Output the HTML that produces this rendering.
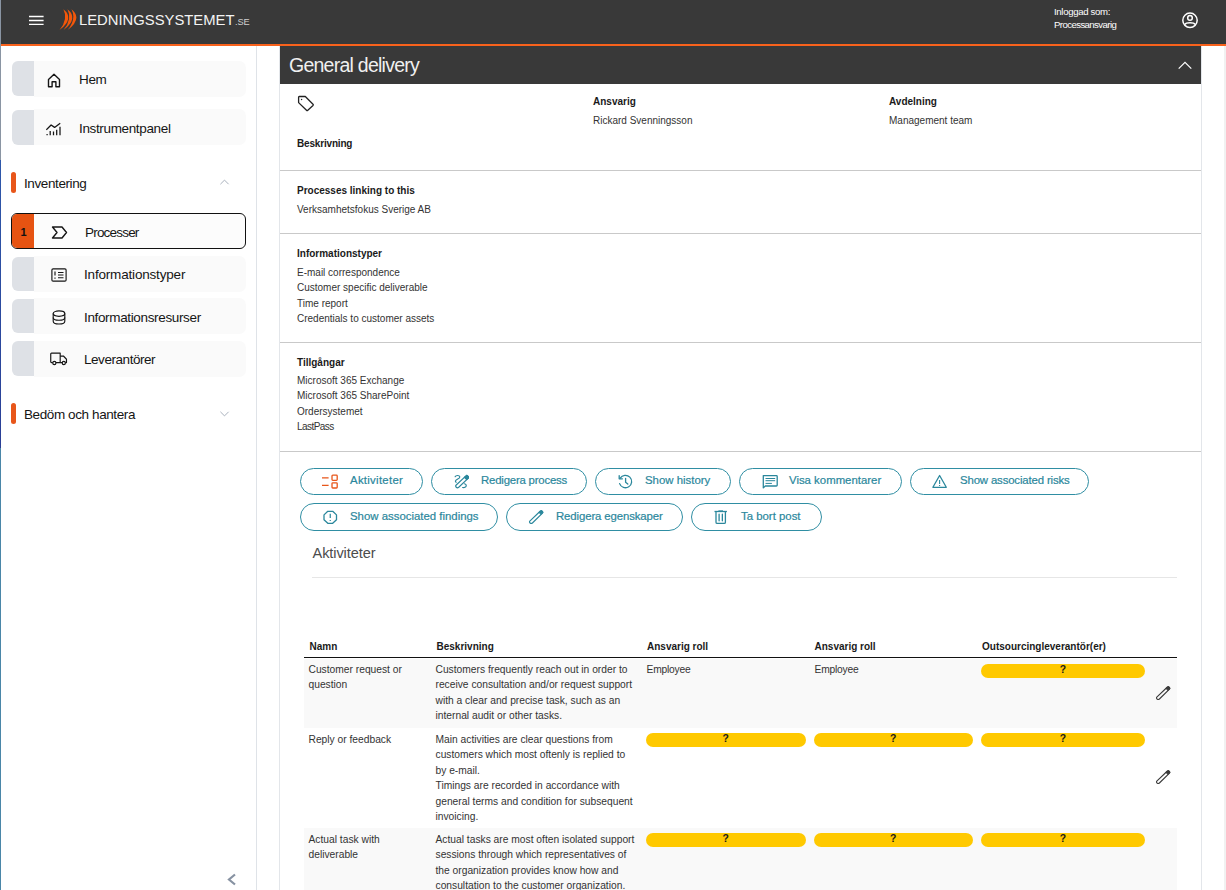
<!DOCTYPE html>
<html lang="sv">
<head>
<meta charset="utf-8">
<title>Ledningssystemet</title>
<style>
*{box-sizing:border-box;margin:0;padding:0}
html,body{width:1226px;height:890px;overflow:hidden;background:#fff;font-family:"Liberation Sans",sans-serif;color:#1b1b1b}
body{position:relative}
.abs{position:absolute}
/* top bar */
#top{position:absolute;left:0;top:0;width:1226px;height:44px;background:#393939}
#topline{position:absolute;left:0;top:44px;width:1226px;height:2px;background:#f9621c}
#winl{position:absolute;left:0;top:0;width:1px;height:890px;background:linear-gradient(#8a95a3 0,#8a95a3 160px,#2e58aa 160px,#2a3f96 448px,#4a86a8 448px,#4a86a8 890px);z-index:9}
#scr{position:absolute;left:1224px;top:46px;width:2px;height:844px;background:#f1f1f1}
#logo{position:absolute;left:79px;top:8.8px;color:#f3f3f3;font-size:15.4px;line-height:22px;letter-spacing:0;white-space:nowrap;transform:scaleX(0.962);transform-origin:0 50%}
#logo small{font-size:9.6px;letter-spacing:-0.1px;color:#d0d0d0;margin-left:0.5px}
#user{position:absolute;left:1054px;top:6px;color:#fff;font-size:9.6px;line-height:12.7px;letter-spacing:-0.33px;white-space:nowrap}
/* sidebar */
#side{position:absolute;left:1px;top:46px;width:256px;height:844px;background:#fff;border-right:1px solid #dfe3e8}
.nav{position:absolute;left:12px;width:234px;height:35px;--t:-1px;--b:-1px}
.nav::before{content:"";position:absolute;left:22px;right:0;top:var(--t);bottom:var(--b);background:#fafafa;border-radius:0 7px 7px 0}
.nav i{position:absolute;left:0;top:0;width:22px;height:100%;background:#dee1e6;border-radius:6px 0 0 6px}
.nav span{position:absolute;top:1px;line-height:35px;font-size:13.5px;letter-spacing:-0.35px;color:#151515;white-space:nowrap}
.nav svg{position:absolute}
.nav.act{left:11px;width:235px;height:36px;border:1px solid #111;background:#fcfcfc;border-radius:6px;overflow:hidden}
.nav.act::before{display:none}
.nav.act i{background:#e65312;width:22px;border-radius:0}
.grp{position:absolute;left:11px;width:5px;height:21px;border-radius:3px;background:#e8561a}
.grpt{position:absolute;left:24px;font-size:13.5px;letter-spacing:-0.4px;color:#151515;white-space:nowrap;line-height:20px}
/* main */
#panel{position:absolute;left:279px;top:46px;width:923px;height:844px;border-left:1px solid #e3e6ea;border-right:1px solid #e3e6ea;background:#fff}
#phead{position:absolute;left:280px;top:46px;width:921px;height:37.5px;background:#393939}
#ptitle{position:absolute;left:289px;top:53px;font-size:19.5px;line-height:24px;color:#f0f0f0;letter-spacing:-0.75px;white-space:nowrap}
.sep{position:absolute;left:280px;width:921px;height:1px;background:#c9c9c9}
.b{position:absolute;font-weight:700;font-size:10px;line-height:14px;letter-spacing:0;color:#1a1a1a;white-space:nowrap}
.t{position:absolute;font-size:10px;line-height:15.33px;letter-spacing:0;color:#333;white-space:nowrap}

.btn{position:absolute;height:27px;border:1px solid #2f8ea3;border-radius:14px;background:#fff}
.btn span{position:absolute;left:49px;top:-1px;line-height:24px;font-size:11.4px;color:#2a879c;white-space:nowrap;letter-spacing:0;-webkit-text-stroke:0.2px #2a879c}
.btn svg{position:absolute}
.btn.r2{height:27.5px}.btn.r2 span{top:0}.btn.r2 svg{margin-top:0}
#akt{position:absolute;left:312.5px;top:543px;font-size:14.6px;line-height:20px;color:#4c4c4c;letter-spacing:-0.1px}
.th{position:absolute;top:640px;font-weight:700;font-size:10px;line-height:14px;color:#1a1a1a;white-space:nowrap}
.row{position:absolute;left:304px;width:873px}
.c{position:absolute;font-size:10.25px;line-height:15.45px;color:#333;white-space:nowrap}
.pill{position:absolute;height:13.5px;border-radius:7px;background:#ffc900;text-align:center;font-weight:700;font-size:10.4px;line-height:12.4px;color:#1a1a1a}
</style>
</head>
<body>
<div id="top"></div><div id="topline"></div><div id="winl"></div><div id="scr"></div>

<svg class="abs" style="left:28px;top:14px" width="17" height="13" viewBox="0 0 17 13" stroke="#fff" stroke-width="1.4"><path d="M1 2.5 H15.6 M1 6.5 H15.6 M1 10.4 H15.6"/></svg>
<svg class="abs" style="left:57px;top:8px" width="24" height="24" viewBox="0 0 24 24" fill="#f4570a"><path d="M6.4 1.2 Q17.9 10.3 2.5 22.1 Q11.5 11 6.4 1.2 Z"/><path d="M10.45 1.2 Q21.95 10.3 6.55 22.1 Q15.55 11 10.45 1.2 Z"/><path d="M14.5 1.2 Q26 10.3 10.6 22.1 Q19.6 11 14.5 1.2 Z"/></svg>
<svg class="abs" style="left:1181px;top:11px" width="18" height="18" viewBox="0 0 18 18" fill="none" stroke="#fff" stroke-width="1.5"><circle cx="9" cy="9.3" r="7.2"/><circle cx="9" cy="6.9" r="2.3"/><path d="M3.6 13.6 C5.2 11.2 12.8 11.2 14.4 13.6"/></svg>
<div id="logo">LEDNINGSSYSTEMET<small>.SE</small></div>
<div id="user">Inloggad som:<br><span style="letter-spacing:-0.58px">Processansvarig</span></div>
<div id="side"></div>

<!-- sidebar -->
<div class="nav" style="top:61px;--t:0px"><i></i>
<svg style="left:35px;top:12.3px" width="14" height="15" viewBox="0 0 14 15" fill="none" stroke="#151515" stroke-width="1.4" stroke-linejoin="round"><path d="M1.5 6.4 L7 1.3 L12.5 6.4 V13.8 H8.9 V8.8 H5.1 V13.8 H1.5 Z"/></svg>
<span style="left:67px">Hem</span></div>
<div class="nav" style="top:110px;--b:0px"><i></i>
<svg style="left:34px;top:11px" width="16" height="16" viewBox="0 0 16 16" fill="none" stroke="#151515" stroke-width="1.3"><path d="M0.3 8.9 L5.1 4 L8.6 6.4 L14.2 2.2" stroke-linejoin="round"/><path d="M1.1 12.9 V14.3 M4.2 9.9 V14.3 M7.5 10.4 V14.3 M10.7 8.8 V14.3 M14 5.8 V14.3" stroke-width="1.25"/></svg>
<span style="left:67px">Instrumentpanel</span></div>
<div class="grp" style="top:172px"></div><div class="grpt" style="top:174px">Inventering</div>
<svg class="abs" style="left:219px;top:178px" width="11" height="8" viewBox="0 0 11 8" fill="none" stroke="#a9b1bd" stroke-width="1"><path d="M1.4 6.2 L5.5 2.1 L9.6 6.2"/></svg>
<div class="nav act" style="top:213px"><i></i><b style="position:absolute;left:8.5px;top:1px;line-height:34px;font-size:11px;color:#111">1</b>
<svg style="left:39px;top:12px" width="17" height="13" viewBox="0 0 17 13" fill="none" stroke="#151515" stroke-width="1.4" stroke-linejoin="round"><path d="M1.5 1 H11 L15.5 6.5 L11 12 H1.5 L6 6.5 Z"/></svg>
<span style="left:73px;top:2px;line-height:34px;letter-spacing:-0.8px">Processer</span></div>
<div class="nav" style="top:257px;height:34px"><i></i>
<svg style="left:38.5px;top:10.5px" width="16" height="14" viewBox="0 0 16 14" fill="none" stroke="#151515" stroke-width="1.15"><rect x="0.9" y="0.9" width="14.2" height="12.2" rx="1.2"/><path d="M4 3.5 V7.5 M4 9.4 V10.8 M7 4.5 H12.5 M7 7 H12.5 M7 9.7 H12.5"/></svg>
<span style="left:72px;line-height:34px;letter-spacing:-0.18px">Informationstyper</span></div>
<div class="nav" style="top:299px;height:34px"><i></i>
<svg style="left:40px;top:11px" width="14" height="15" viewBox="0 0 14 15" fill="none" stroke="#151515" stroke-width="1.15"><ellipse cx="7" cy="3.6" rx="5.8" ry="2.7"/><path d="M1.2 3.6 V11.2 C1.2 12.8 3.8 14 7 14 C10.2 14 12.8 12.8 12.8 11.2 V3.6"/><path d="M1.2 7.4 C1.2 9 3.8 10.2 7 10.2 C10.2 10.2 12.8 9 12.8 7.4"/></svg>
<span style="left:72px;top:2px;line-height:34px">Informationsresurser</span></div>
<div class="nav" style="top:341px;height:35px;--t:-0.5px;--b:-0.7px"><i></i>
<svg style="left:38px;top:11px" width="17.6" height="14" viewBox="0 0 19 14" preserveAspectRatio="none" fill="none" stroke="#151515" stroke-width="1.25" stroke-linejoin="round"><path d="M3 10.5 H1.6 C1.2 10.5 0.8 10.1 0.8 9.7 V2 C0.8 1.5 1.2 1.1 1.6 1.1 H11 V10.5 H6.4"/><path d="M11 4 H14.5 L17.8 7.2 V10.5 H16.6 M11 10.5 H13.2"/><circle cx="4.7" cy="11" r="1.7"/><circle cx="14.9" cy="11" r="1.7"/></svg>
<span style="left:72px;letter-spacing:-0.45px">Leverant&ouml;rer</span></div>
<div class="grp" style="top:403px"></div><div class="grpt" style="top:404.6px">Bed&ouml;m och hantera</div>
<svg class="abs" style="left:219px;top:410px" width="11" height="8" viewBox="0 0 11 8" fill="none" stroke="#a9b1bd" stroke-width="1"><path d="M1.4 1.8 L5.5 5.9 L9.6 1.8"/></svg>
<svg class="abs" style="left:226px;top:873px" width="11" height="13" viewBox="0 0 11 13" fill="none" stroke="#8792a2" stroke-width="2.2"><path d="M9 1.5 L3 6.5 L9 11.5"/></svg>
<div id="panel"></div>
<div id="phead"></div>
<svg class="abs" style="left:1177px;top:59px" width="16" height="11" viewBox="0 0 16 11" fill="none" stroke="#fff" stroke-width="1.2"><path d="M1.7 9.6 L8 3.3 L14.3 9.6"/></svg>
<div id="ptitle">General delivery</div>

<!-- content -->
<svg class="abs" style="left:297px;top:95px" width="18" height="17" viewBox="0 0 18 17" fill="none" stroke="#222" stroke-width="1.3" stroke-linejoin="round"><path d="M1.6 2.2 C1.6 1.8 1.9 1.5 2.3 1.5 H8.3 L16 9.2 C16.4 9.6 16.4 10.1 16 10.5 L10.8 15.3 C10.4 15.7 9.9 15.7 9.5 15.3 L1.6 7.6 Z"/><circle cx="4.6" cy="4.5" r="0.7" fill="#222" stroke="none"/></svg>
<div class="b" style="left:593px;top:95px">Ansvarig</div>
<div class="t" style="left:593px;top:113px">Rickard Svenningsson</div>
<div class="b" style="left:889px;top:95px">Avdelning</div>
<div class="t" style="left:889px;top:113px">Management team</div>
<div class="b" style="left:297px;top:137px;letter-spacing:-0.18px">Beskrivning</div>
<div class="sep" style="top:170px"></div>
<div class="b" style="left:297px;top:184px">Processes linking to this</div>
<div class="t" style="left:297px;top:202px">Verksamhetsfokus Sverige AB</div>
<div class="sep" style="top:233px"></div>
<div class="b" style="left:297px;top:247px">Informationstyper</div>
<div class="t" style="left:297px;top:265px">E-mail correspondence<br>Customer specific deliverable<br>Time report<br>Credentials to customer assets</div>
<div class="sep" style="top:342px"></div>
<div class="b" style="left:297px;top:356px">Tillg&aring;ngar</div>
<div class="t" style="left:297px;top:373px">Microsoft 365 Exchange<br>Microsoft 365 SharePoint<br>Ordersystemet<br><span style="letter-spacing:-0.55px">LastPass</span></div>
<div class="sep" style="top:451px"></div>

<!-- buttons -->
<div class="btn" style="left:300px;top:468px;width:123px"><svg style="left:20.3px;top:4.5px" width="18" height="16" viewBox="0 0 18 16" fill="none" stroke="#e8561a" stroke-width="1.3"><path d="M1 3.8 H7.6 M1 11.4 H7.6"/><rect x="11" y="1.2" width="5.2" height="5.2" rx="0.8"/><rect x="11" y="8.8" width="5.2" height="5.2" rx="0.8"/></svg><span style="letter-spacing:0.28px">Aktiviteter</span></div>
<div class="btn" style="left:431px;top:468px;width:155.5px"><svg style="left:20.7px;top:5px" width="16.6" height="14.75" viewBox="0 0 18 16" fill="none" stroke="#2a879c" stroke-width="1.25" stroke-linecap="round" stroke-linejoin="round"><path d="M2.3 3 C3 1.2 7 1 7.4 3.1 C7.7 5.2 3 5.4 2.6 7.6 C2.5 8.4 3 8.8 3.6 8.9"/><path d="M14.1 2 C14.6 1.5 15.3 1.5 15.8 2 L16.6 2.8 C17.1 3.3 17.1 4 16.6 4.5 L6.2 14.4 C5.4 15.1 4.2 15.1 3.5 14.4 C2.8 13.7 2.8 12.6 3.5 11.9 Z"/><path d="M14.1 2 C14.6 1.5 15.3 1.5 15.8 2 L16.6 2.8 C17.1 3.3 17.1 4 16.6 4.5 L14.9 6.1 L12.3 3.7 Z" fill="#2a879c"/><path d="M12.3 10.6 C14 11 15 12.4 14 13.8 C13.2 14.8 11.6 14.8 10.4 14.6"/></svg><span style="letter-spacing:-0.2px">Redigera process</span></div>
<div class="btn" style="left:595px;top:468px;width:136px"><svg style="left:21px;top:5px" width="17" height="16" viewBox="0 0 17 16" fill="none" stroke="#2a879c" stroke-width="1.3" stroke-linecap="round" stroke-linejoin="round"><path d="M3.2 4.2 A6.2 6.2 0 1 1 2.6 9.6"/><path d="M2.2 1.6 V4.8 H5.4"/><path d="M8.6 4.3 V8.2 L10.8 10"/></svg><span>Show history</span></div>
<div class="btn" style="left:739px;top:468px;width:163px"><svg style="left:21px;top:5px" width="18" height="16" viewBox="0 0 18 16" fill="none" stroke="#2a879c" stroke-width="1.3" stroke-linejoin="round"><path d="M2.3 1.6 H15.4 Q16.2 1.6 16.2 2.4 V11.2 Q16.2 12 15.4 12 H4.3 L2.3 13.9 Z"/><path d="M4.9 4.5 H13.8 M4.9 6.7 H13.8 M4.9 9.4 H10.5" stroke-width="1" stroke-linecap="round"/></svg><span>Visa kommentarer</span></div>
<div class="btn" style="left:910px;top:468px;width:179px"><svg style="left:20px;top:4px" width="18" height="16" viewBox="0 0 18 16" fill="none" stroke="#2a879c" stroke-width="1.3" stroke-linejoin="round"><path d="M8.6 2.5 L15.3 14.3 H1.9 Z"/><path d="M8.6 7 V11 M8.6 12.1 V13" stroke-width="1.1"/></svg><span style="letter-spacing:-0.15px">Show associated risks</span></div>
<div class="btn r2" style="left:300px;top:503px;width:198px"><svg style="left:21px;top:5px" width="18" height="16" viewBox="0 0 18 16" fill="none" stroke="#2a879c" stroke-width="1.3" stroke-linejoin="round"><path d="M5.8 2.3 H10.7 L14.5 5.9 V10.7 L10.7 14.3 H5.8 L2 10.7 V5.9 Z"/><path d="M8.25 4.8 V9 M8.25 11 V12" stroke-width="1.2"/></svg><span>Show associated findings</span></div>
<div class="btn r2" style="left:506px;top:503px;width:177px"><svg style="left:21px;top:5px" width="18" height="16" viewBox="0 0 18 16" fill="none" stroke="#2a879c" stroke-width="1.3" stroke-linejoin="round"><path d="M12.4 2 Q13.2 1.3 14 2 L14.6 2.6 Q15.2 3.4 14.5 4.1 L4.4 14 Q3.4 14.8 2.3 14.2 Q1 13.2 1.8 12.2 Z" stroke-width="1.15"/><path d="M12.4 2 Q13.2 1.3 14 2 L14.6 2.6 Q15.2 3.4 14.5 4.1 L13 5.6 L10.9 3.5 Z" fill="#2a879c" stroke-width="0.8"/></svg><span style="letter-spacing:-0.12px">Redigera egenskaper</span></div>
<div class="btn r2" style="left:691px;top:503px;width:131px"><svg style="left:21px;top:5px" width="16" height="16" viewBox="0 0 16 16" fill="none" stroke="#2a879c" stroke-width="1.3"><path d="M1.5 2.5 H13.9"/><path d="M5.4 1.8 H10" stroke-width="0.9"/><path d="M3 2.5 V13.2 Q3 14.4 4.2 14.4 H11.2 Q12.4 14.4 12.4 13.2 V2.5"/><path d="M6.1 5.2 V11.8 M9.35 5.2 V11.8" stroke-linecap="round"/></svg><span>Ta bort post</span></div>
<div id="akt">Aktiviteter</div>
<div class="abs" style="left:312px;top:577px;width:865px;height:1px;background:#e6e6e6"></div>
<!-- table -->
<div class="th" style="left:309.5px">Namn</div>
<div class="th" style="left:436.5px">Beskrivning</div>
<div class="th" style="left:647px">Ansvarig roll</div>
<div class="th" style="left:814.5px">Ansvarig roll</div>
<div class="th" style="left:982px">Outsourcingleverant&ouml;r(er)</div>
<div class="abs" style="left:304px;top:657px;width:873px;height:1.25px;background:#111"></div>
<div class="row" style="top:658.5px;height:69px;background:#f9f9f9"></div>
<div class="c" style="left:308.5px;top:662px">Customer request or<br>question</div>
<div class="c" style="left:435.5px;top:662px">Customers frequently reach out in order to<br>receive consultation and/or request support<br>with a clear and precise task, such as an<br>internal audit or other tasks.</div>
<div class="c" style="left:646.5px;top:662px;letter-spacing:-0.2px">Employee</div><div class="c" style="left:814.5px;top:662px;letter-spacing:-0.2px">Employee</div>
<div class="pill" style="left:981px;top:664px;width:164px">?</div>
<svg class="abs" style="left:1155px;top:685.1px" width="18" height="16" viewBox="0 0 18 16" fill="none" stroke="#3a3a3a" stroke-linejoin="round"><path d="M12.4 2 Q13.2 1.3 14 2 L14.6 2.6 Q15.2 3.4 14.5 4.1 L4.4 14 Q3.4 14.8 2.3 14.2 Q1 13.2 1.8 12.2 Z" stroke-width="1.1"/><path d="M12.4 2 Q13.2 1.3 14 2 L14.6 2.6 Q15.2 3.4 14.5 4.1 L13 5.6 L10.9 3.5 Z" fill="#3a3a3a" stroke-width="0.8"/></svg>
<div class="c" style="left:308.5px;top:732px">Reply or feedback</div>
<div class="c" style="left:435.5px;top:732px">Main activities are clear questions from<br>customers which most oftenly is replied to<br>by e-mail.<br>Timings are recorded in accordance with<br>general terms and condition for subsequent<br>invoicing.</div>
<div class="pill" style="left:646px;top:733px;width:159.5px">?</div><div class="pill" style="left:813.5px;top:733px;width:159.5px">?</div><div class="pill" style="left:981px;top:733px;width:164px">?</div>
<svg class="abs" style="left:1155px;top:769.2px" width="18" height="16" viewBox="0 0 18 16" fill="none" stroke="#3a3a3a" stroke-linejoin="round"><path d="M12.4 2 Q13.2 1.3 14 2 L14.6 2.6 Q15.2 3.4 14.5 4.1 L4.4 14 Q3.4 14.8 2.3 14.2 Q1 13.2 1.8 12.2 Z" stroke-width="1.1"/><path d="M12.4 2 Q13.2 1.3 14 2 L14.6 2.6 Q15.2 3.4 14.5 4.1 L13 5.6 L10.9 3.5 Z" fill="#3a3a3a" stroke-width="0.8"/></svg>
<div class="row" style="top:828px;height:62px;background:#f9f9f9"></div>
<div class="c" style="left:308.5px;top:832px">Actual task with<br>deliverable</div>
<div class="c" style="left:435.5px;top:832px">Actual tasks are most often isolated support<br>sessions through which representatives of<br>the organization provides know how and<br>consultation to the customer organization.</div>
<div class="pill" style="left:646px;top:833px;width:159.5px">?</div><div class="pill" style="left:813.5px;top:833px;width:159.5px">?</div><div class="pill" style="left:981px;top:833px;width:164px">?</div>
</body>
</html>
